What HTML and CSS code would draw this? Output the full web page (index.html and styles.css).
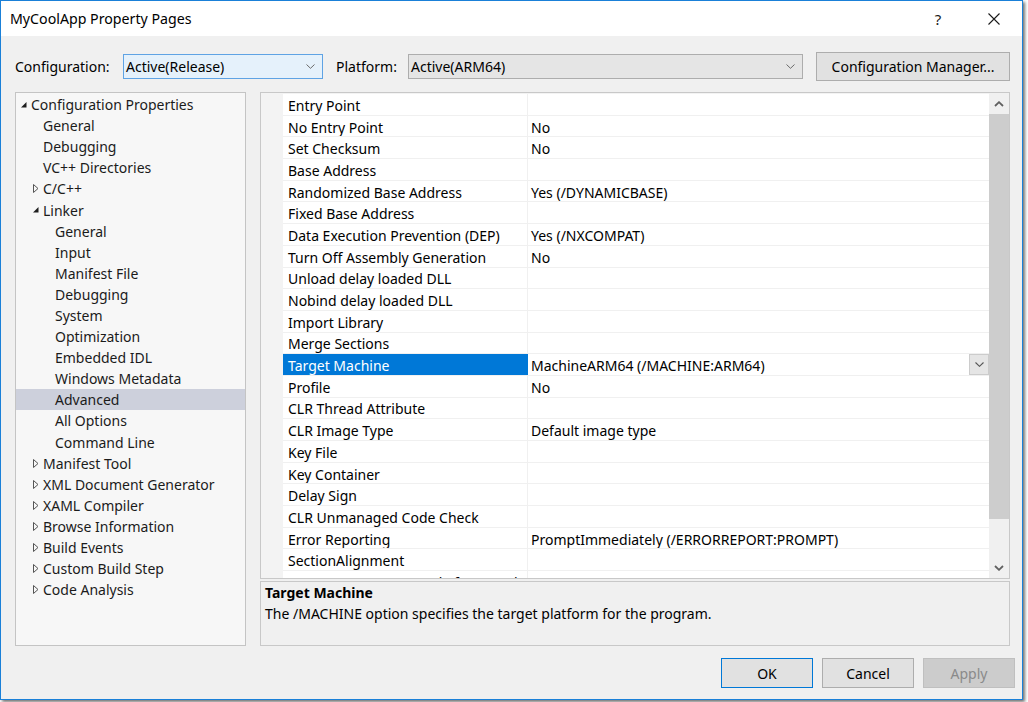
FILE: index.html
```html
<!DOCTYPE html>
<html>
<head>
<meta charset="utf-8">
<title>MyCoolApp Property Pages</title>
<link rel="stylesheet" href="styles.css">
</head>
<body>
<div class="window">
  <div class="titlebar">
    <div class="title">MyCoolApp Property Pages</div>
    <div class="tb-help">?</div>
    <div class="tb-close">
      <svg width="12" height="12" viewBox="0 0 12 12"><path d="M0.5 0.5 L11.5 11.5 M11.5 0.5 L0.5 11.5" stroke="#1a1a1a" stroke-width="1.1" fill="none"/></svg>
    </div>
  </div>
  <div class="body">
    <div class="toolbar">
      <div class="lbl lbl-config">Configuration:</div>
      <div class="combo combo-focus">
        <span class="combo-text">Active(Release)</span>
        <svg class="chev" width="9" height="5" viewBox="0 0 9 5"><path d="M0.5 0.5 L4.5 4.3 L8.5 0.5" stroke="#6a6a6a" stroke-width="1" fill="none"/></svg>
      </div>
      <div class="lbl lbl-platform">Platform:</div>
      <div class="combo combo-plat">
        <span class="combo-text">Active(ARM64)</span>
        <svg class="chev" width="9" height="5" viewBox="0 0 9 5"><path d="M0.5 0.5 L4.5 4.3 L8.5 0.5" stroke="#6a6a6a" stroke-width="1" fill="none"/></svg>
      </div>
      <div class="btn btn-cfg">Configuration Manager...</div>
    </div>

    <div class="main">
      <div class="tree">
        <div class="node l0"><span class="tw"><svg width="6" height="6" viewBox="0 0 6 6"><path d="M5.5 0 L5.5 5.5 L0 5.5 Z" fill="#1e1e1e"/></svg></span>Configuration Properties</div>
        <div class="node l1"><span class="tw"></span>General</div>
        <div class="node l1"><span class="tw"></span>Debugging</div>
        <div class="node l1"><span class="tw"></span>VC++ Directories</div>
        <div class="node l1"><span class="tw"><svg width="6" height="9" viewBox="0 0 6 9"><path d="M0.5 0.5 L5 4.5 L0.5 8.5 Z" fill="none" stroke="#555" stroke-width="1"/></svg></span>C/C++</div>
        <div class="node l1"><span class="tw"><svg width="6" height="6" viewBox="0 0 6 6"><path d="M5.5 0 L5.5 5.5 L0 5.5 Z" fill="#1e1e1e"/></svg></span>Linker</div>
        <div class="node l2"><span class="tw"></span>General</div>
        <div class="node l2"><span class="tw"></span>Input</div>
        <div class="node l2"><span class="tw"></span>Manifest File</div>
        <div class="node l2"><span class="tw"></span>Debugging</div>
        <div class="node l2"><span class="tw"></span>System</div>
        <div class="node l2"><span class="tw"></span>Optimization</div>
        <div class="node l2"><span class="tw"></span>Embedded IDL</div>
        <div class="node l2"><span class="tw"></span>Windows Metadata</div>
        <div class="node l2 sel"><span class="tw"></span>Advanced</div>
        <div class="node l2"><span class="tw"></span>All Options</div>
        <div class="node l2"><span class="tw"></span>Command Line</div>
        <div class="node l1"><span class="tw"><svg width="6" height="9" viewBox="0 0 6 9"><path d="M0.5 0.5 L5 4.5 L0.5 8.5 Z" fill="none" stroke="#555" stroke-width="1"/></svg></span>Manifest Tool</div>
        <div class="node l1"><span class="tw"><svg width="6" height="9" viewBox="0 0 6 9"><path d="M0.5 0.5 L5 4.5 L0.5 8.5 Z" fill="none" stroke="#555" stroke-width="1"/></svg></span>XML Document Generator</div>
        <div class="node l1"><span class="tw"><svg width="6" height="9" viewBox="0 0 6 9"><path d="M0.5 0.5 L5 4.5 L0.5 8.5 Z" fill="none" stroke="#555" stroke-width="1"/></svg></span>XAML Compiler</div>
        <div class="node l1"><span class="tw"><svg width="6" height="9" viewBox="0 0 6 9"><path d="M0.5 0.5 L5 4.5 L0.5 8.5 Z" fill="none" stroke="#555" stroke-width="1"/></svg></span>Browse Information</div>
        <div class="node l1"><span class="tw"><svg width="6" height="9" viewBox="0 0 6 9"><path d="M0.5 0.5 L5 4.5 L0.5 8.5 Z" fill="none" stroke="#555" stroke-width="1"/></svg></span>Build Events</div>
        <div class="node l1"><span class="tw"><svg width="6" height="9" viewBox="0 0 6 9"><path d="M0.5 0.5 L5 4.5 L0.5 8.5 Z" fill="none" stroke="#555" stroke-width="1"/></svg></span>Custom Build Step</div>
        <div class="node l1"><span class="tw"><svg width="6" height="9" viewBox="0 0 6 9"><path d="M0.5 0.5 L5 4.5 L0.5 8.5 Z" fill="none" stroke="#555" stroke-width="1"/></svg></span>Code Analysis</div>
      </div>

      <div class="right">
        <div class="grid">
          <div class="rows">
            <div class="row"><div class="name">Entry Point</div><div class="val"></div></div>
            <div class="row"><div class="name">No Entry Point</div><div class="val">No</div></div>
            <div class="row"><div class="name">Set Checksum</div><div class="val">No</div></div>
            <div class="row"><div class="name">Base Address</div><div class="val"></div></div>
            <div class="row"><div class="name">Randomized Base Address</div><div class="val">Yes (/DYNAMICBASE)</div></div>
            <div class="row"><div class="name">Fixed Base Address</div><div class="val"></div></div>
            <div class="row"><div class="name">Data Execution Prevention (DEP)</div><div class="val">Yes (/NXCOMPAT)</div></div>
            <div class="row"><div class="name">Turn Off Assembly Generation</div><div class="val">No</div></div>
            <div class="row"><div class="name">Unload delay loaded DLL</div><div class="val"></div></div>
            <div class="row"><div class="name">Nobind delay loaded DLL</div><div class="val"></div></div>
            <div class="row"><div class="name">Import Library</div><div class="val"></div></div>
            <div class="row"><div class="name">Merge Sections</div><div class="val"></div></div>
            <div class="row row-sel"><div class="name">Target Machine</div><div class="val val-edit"><span class="val-text">MachineARM64 (/MACHINE:ARM64)</span><span class="dd"><svg width="9" height="5" viewBox="0 0 9 5"><path d="M0.5 0.5 L4.5 4.3 L8.5 0.5" stroke="#555" stroke-width="1.1" fill="none"/></svg></span></div></div>
            <div class="row"><div class="name">Profile</div><div class="val">No</div></div>
            <div class="row"><div class="name">CLR Thread Attribute</div><div class="val"></div></div>
            <div class="row"><div class="name">CLR Image Type</div><div class="val">Default image type</div></div>
            <div class="row"><div class="name">Key File</div><div class="val"></div></div>
            <div class="row"><div class="name">Key Container</div><div class="val"></div></div>
            <div class="row"><div class="name">Delay Sign</div><div class="val"></div></div>
            <div class="row"><div class="name">CLR Unmanaged Code Check</div><div class="val"></div></div>
            <div class="row"><div class="name">Error Reporting</div><div class="val">PromptImmediately (/ERRORREPORT:PROMPT)</div></div>
            <div class="row"><div class="name">SectionAlignment</div><div class="val"></div></div>
            <div class="row"><div class="name">Preserve Last Error Code for PInvoke Calls</div><div class="val"></div></div>
          </div>
          <div class="vscroll">
            <div class="sb-btn"><svg width="10" height="6" viewBox="0 0 10 6"><path d="M1 5 L5 1.2 L9 5" stroke="#606060" stroke-width="1.8" fill="none"/></svg></div>
            <div class="sb-thumb"></div>
            <div class="sb-track"></div>
            <div class="sb-btn"><svg width="10" height="6" viewBox="0 0 10 6"><path d="M1 1 L5 4.8 L9 1" stroke="#606060" stroke-width="1.8" fill="none"/></svg></div>
          </div>
        </div>
        <div class="desc">
          <div class="desc-title">Target Machine</div>
          <div class="desc-text">The /MACHINE option specifies the target platform for the program.</div>
        </div>
      </div>
    </div>

    <div class="footer">
      <div class="btn btn-dlg btn-default">OK</div>
      <div class="btn btn-dlg">Cancel</div>
      <div class="btn btn-dlg btn-disabled">Apply</div>
    </div>
  </div>
</div>
</body>
</html>
```
FILE: styles.css
```css
* { box-sizing: border-box; }
html, body { margin: 0; padding: 0; background: #ffffff; }
body {
  font-family: "Noto Sans", "Open Sans", sans-serif;
  font-size: 14px;
  color: #000;
  width: 1028px;
  height: 702px;
  overflow: hidden;
}
.window {
  width: 1023px;
  height: 700px;
  border: 1px solid #1a80d8;
  background: #f0f0f0;
  box-shadow: 2px 2px 3px rgba(0,0,0,0.55);
  display: flex;
  flex-direction: column;
}
.titlebar {
  height: 35px;
  background: #ffffff;
  display: flex;
  align-items: center;
  padding-left: 9px;
  padding-right: 5px;
  flex: none;
}
.title { font-size: 14.2px; flex: 1; color: #000; padding-bottom: 1px; }
.tb-help {
  width: 46px;
  text-align: center;
  font-size: 15px;
  color: #1a1a1a;
}
.tb-close {
  width: 46px;
  display: flex;
  justify-content: center;
  align-items: center;
  margin-left: 10px;
}
.body {
  flex: 1;
  display: flex;
  flex-direction: column;
  padding: 0 12px 0 14px;
}
.toolbar {
  margin-top: 16px;
  height: 29px;
  display: flex;
  align-items: center;
  flex: none;
}
.lbl { white-space: nowrap; }
.lbl-config { width: 108px; }
.lbl-platform { width: 72px; margin-left: 13px; }
.combo {
  height: 25px;
  display: flex;
  align-items: center;
  padding: 0 7px 0 2px;
  border: 1px solid #adadad;
  background: #e5e5e5;
}
.combo-focus { width: 200px; background: #e5f1fb; border-color: #5fa3e4; }
.combo-plat { width: 395px; }
.combo-text { flex: 1; white-space: nowrap; }
.chev { flex: none; }
.btn {
  display: flex;
  align-items: center;
  justify-content: center;
  background: #e1e1e1;
  border: 1px solid #adadad;
  white-space: nowrap;
}
.btn-cfg { width: 194px; height: 29px; margin-left: 13px; }
.main {
  margin-top: 11px;
  height: 554px;
  display: flex;
  flex: none;
}
.tree {
  width: 231px;
  height: 554px;
  border: 1px solid #c4c4c4;
  background: #f7f7f7;
  padding-top: 1px;
  overflow: hidden;
  flex: none;
}
.node {
  height: 21.1px;
  display: flex;
  align-items: center;
  white-space: nowrap;
  color: #1b1b1b;
}
.node.l0 { padding-left: 0; }
.node.l1 { padding-left: 12px; }
.node.l2 { padding-left: 24px; }
.node.sel { background: #cdd0dc; }
.tw {
  width: 15px;
  flex: none;
  display: flex;
  align-items: center;
  padding-left: 5px;
  height: 100%;
}
.right {
  margin-left: 14px;
  width: 750px;
  display: flex;
  flex-direction: column;
}
.grid {
  height: 487px;
  border: 1px solid #c8c8c8;
  display: flex;
  background: #f3f3f3;
  flex: none;
}
.rows {
  flex: 1;
  padding-left: 22px;
  padding-top: 1px;
  overflow: hidden;
}
.row {
  display: flex;
  height: 21.7px;
  background: #fff;
  border-bottom: 1px solid #f0f0f0;
  white-space: nowrap;
}
.name {
  width: 245px;
  flex: none;
  padding-left: 5px;
  padding-top: 2px;
  border-right: 1px solid #f0f0f0;
  display: flex;
  align-items: center;
  overflow: hidden;
}
.val {
  flex: 1;
  padding-left: 3px;
  padding-top: 2px;
  display: flex;
  align-items: center;
  overflow: hidden;
}
.row-sel .name { background: #0078d7; color: #fff; border-right-color: #0078d7; }
.val-edit { padding-top: 0; }
.val-text { flex: 1; padding-top: 2px; }
.dd {
  width: 20px;
  height: 21px;
  flex: none;
  background: #e5e5e5;
  border: 1px solid #cccccc;
  display: flex;
  align-items: center;
  justify-content: center;
}
.vscroll {
  width: 20px;
  flex: none;
  display: flex;
  flex-direction: column;
  background: #f0f0f0;
}
.sb-btn {
  height: 21px;
  display: flex;
  align-items: center;
  justify-content: center;
  flex: none;
}
.sb-thumb { height: 405px; background: #cdcdcd; flex: none; }
.sb-track { flex: 1; }
.desc {
  margin-top: 2px;
  height: 65px;
  border: 1px solid #c8c8c8;
  background: #f0f0f0;
  padding: 0 4px;
}
.desc-title { font-weight: bold; height: 21px; line-height: 21px; }
.desc-text { height: 21px; line-height: 21px; }
.footer {
  margin-top: 12px;
  margin-right: -5px;
  height: 30px;
  display: flex;
  justify-content: flex-end;
  gap: 9px;
  flex: none;
}
.btn-dlg { width: 92px; height: 30px; }
.btn-default { border-color: #0078d7; }
.btn-disabled { background: #cccccc; border-color: #bfbfbf; color: #8a8a8a; }
```
